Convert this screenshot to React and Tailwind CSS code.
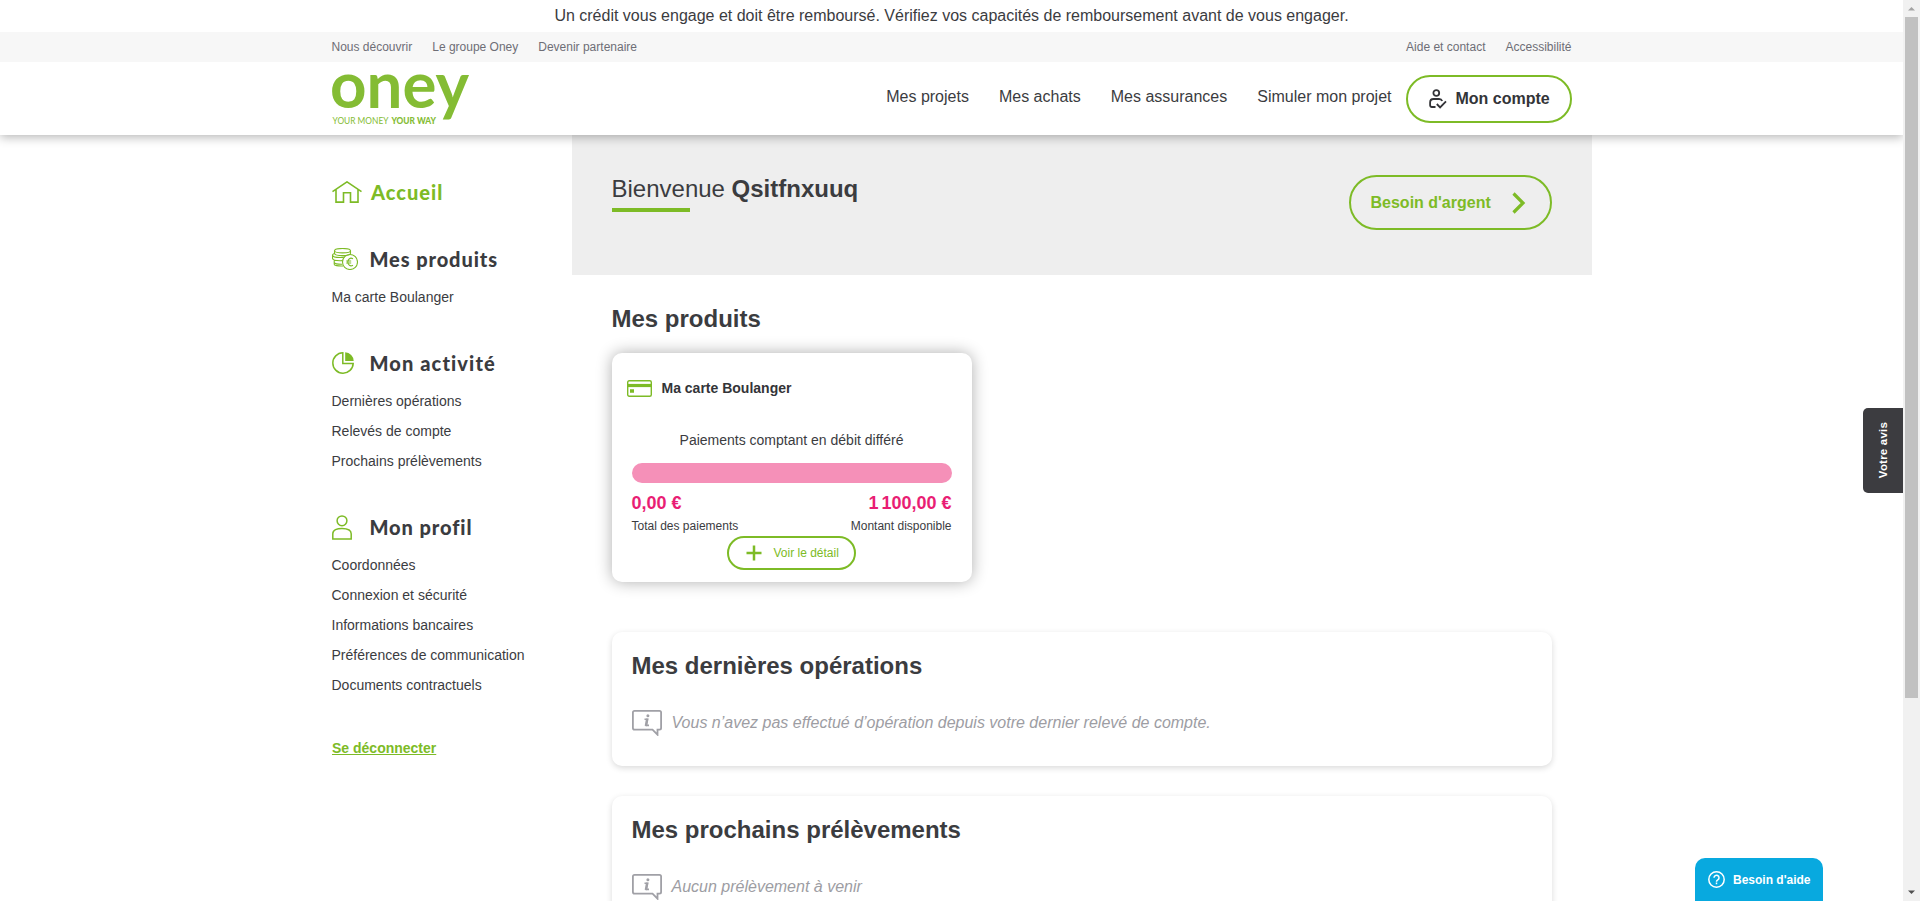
import React from "react";

const G = "#7dbb26";

function Icon({ w, h, sw = 1.4, className = "", children }) {
  return (
    <svg width={w} height={h} viewBox={`0 0 ${w} ${h}`} fill="none" stroke={G} strokeWidth={sw} className={"block shrink-0 " + className}>
      {children}
    </svg>
  );
}

const HomeIcon = () => (
  <Icon w={30} h={22} sw={1.6} className="ml-[0.5px]">
    <path d="M.5 10.6 15 .9l14.5 9.7M4 8.6v12.500h7.500v-9.300h7v9.300h7.500V8.600" />
  </Icon>
);

const CoinsIcon = () => (
  <Icon w={26} h={22} sw={1.1} className="ml-[0.5px]">
    <ellipse cx="10.500" cy="2.700" rx="8" ry="2.200" />
    <path d="M2.500 2.700v2.500c0 1.400 3.600 2.400 8 2.400s8-1 8-2.400V2.700" />
    <path d="M2.800 5.200C1.400 5.700.5 6.300.5 7c0 1.400 3.500 2.500 7.600 2.500 1.700 0 3.200-.1 4.400-.5M.5 7v3.300c0 1.300 3.500 2.400 7.600 2.400 1 0 1.700 0 2.500-.1M2.200 11.800v2.500c0 1.400 3.400 2.100 8 2M2.200 14.500v1.700c0 1.300 3.600 2 9 1.800" />
    <circle cx="18" cy="14" r="7.500" />
    <path d="M21 10.800c-2.700-1.600-5.200.2-5.200 3.200s2.500 4.800 5.200 3.200M14.200 13h5M14.200 15h5" />
  </Icon>
);

const PieIcon = () => (
  <Icon w={22} h={22} sw={1.500} className="ml-[0.5px]">
    <path d="M10.800.8A10.200 10.200 0 1 0 21.200 11.400H10.800z" />
    <path d="M13.200.3A8.800 8.800 0 0 1 21.700 9H13.200z" fill={G} stroke="none" />
  </Icon>
);

const UserIcon = () => (
  <Icon w={20} h={25} sw={1.500} className="ml-[0.5px]">
    <circle cx="10" cy="5.800" r="4.900" />
    <path d="M.8 24v-5.300c0-3.600 4.100-5.300 9.200-5.300s9.200 1.700 9.200 5.300V24z" />
  </Icon>
);

const AccountIcon = () => (
  <svg width="18" height="20" viewBox="0 0 18 20" fill="none" stroke="#333438" strokeWidth="1.8" className="block">
    <circle cx="7.300" cy="4" r="2.900" />
    <path d="M6.500 18H2.800A1.700 1.700 0 0 1 1.100 16.300V13.500c0-2.100 1.400-3.500 3.400-3.500h5.600c1.500 0 2.600.8 3.100 2M7.800 15l3.300 3.400 5.900-6" />
  </svg>
);

const InfoIcon = () => (
  <svg width="30" height="26" viewBox="0 0 30 26" fill="none" stroke="#a0a0a6" strokeWidth="1.800" className="block shrink-0">
    <path d="M2.500.9h25q1.600 0 1.600 1.600v15.600q0 1.600-1.600 1.600h-2v5l-5-5h-18Q.9 19.700.9 18.100V2.500Q.9.900 2.500.9z" />
    <circle cx="15.900" cy="5.700" r="1.500" fill="#a0a0a6" stroke="none" />
    <path d="M12.500 9.200h3.200l-1.300 6.200h2.600" strokeWidth="1.600" />
    <path d="M15.100 8.600 13.800 16" strokeWidth="2.200" />
  </svg>
);

function Group({ icon, tracking, title, links, className }) {
  return (
    <div className={className}>
      <div className="flex h-[30px] items-center">
        <div className="flex w-[38px] items-center">{icon}</div>
        <h2 className={"font-['Lato',sans-serif] text-[20px] font-black leading-[30px] whitespace-nowrap " + tracking}>{title}</h2>
      </div>
      <ul className="mt-[8px]">
        {links.map((l) => (
          <li key={l} className="h-[30px] text-[14px] leading-[30px]">{l}</li>
        ))}
      </ul>
    </div>
  );
}

function Panel({ title, text }) {
  return (
    <section className="h-[134px] shrink-0 rounded-[10px] bg-white px-5 pt-[20px] shadow-[0_2px_6px_rgba(0,0,0,0.15)]">
      <h2 className="text-[24px] font-bold leading-[28px]">{title}</h2>
      <div className="mt-[30px] flex items-start">
        <InfoIcon />
        <p className="ml-[10px] mt-[3px] text-[16px] italic leading-[20px] text-[#9d9da3]">{text}</p>
      </div>
    </section>
  );
}

export default function App() {
  return (
    <div className="relative flex h-[901px] w-[1920px] overflow-hidden bg-white font-['Liberation_Sans',Arial,sans-serif] text-[#3b3c3f]">
      <div className="flex w-[1903px] flex-col">
        <p className="h-8 text-center text-[16px] leading-[32px]">
          Un crédit vous engage et doit être remboursé. Vérifiez vos capacités de remboursement avant de vous engager.
        </p>
        <div className="relative z-20 h-[30px] bg-[#f7f7f7]">
          <div className="mx-auto flex w-[1240px] gap-5 text-[12px] leading-[30px] text-[#6e6e76]">
            <span>Nous découvrir</span>
            <span>Le groupe Oney</span>
            <span>Devenir partenaire</span>
            <span className="ml-auto">Aide et contact</span>
            <span>Accessibilité</span>
          </div>
        </div>
        <header className="relative z-10 h-[73px] shrink-0 bg-white shadow-[0_2px_10px_rgba(0,0,0,0.3)]">
          <div className="mx-auto flex w-[1240px] items-start">
            <svg width="140" height="66" viewBox="0 0 140 66" className="block overflow-visible font-['Lato',sans-serif]" fill="#84bc34">
              <text x="-2" y="45.500" fontSize="65" fontWeight="700" textLength="139" lengthAdjust="spacingAndGlyphs">oney</text>
              <text x="0.500" y="62" fontSize="9" textLength="56" lengthAdjust="spacingAndGlyphs">YOUR MONEY</text>
              <text x="59.500" y="62" fontSize="9" fontWeight="900" textLength="44.500" lengthAdjust="spacingAndGlyphs">YOUR WAY</text>
            </svg>
            <nav className="ml-auto mt-[24px] flex gap-[30px] text-[16px] leading-[22px]">
              <span>Mes projets</span>
              <span>Mes achats</span>
              <span>Mes assurances</span>
              <span>Simuler mon projet</span>
            </nav>
            <button className="ml-[14px] mt-[13px] flex h-[48px] w-[166px] items-center rounded-full border-2 border-[#7dbb26] pl-[21px] text-[16px] font-bold text-[#333438]">
              <AccountIcon />
              <span className="ml-[9px] leading-[20px]">Mon compte</span>
            </button>
          </div>
        </header>
        <div className="mx-auto flex w-[1280px] flex-1">
          <aside className="w-[260px] pl-5 pt-[42px]">
            <div className="flex h-[30px] items-center text-[#7dbb26]">
              <HomeIcon />
              <span className="ml-[9px] font-['Lato',sans-serif] text-[20px] font-black leading-[30px] tracking-[1px]">Accueil</span>
            </div>
            <Group className="mt-[37px]" tracking="tracking-[0.9px]" icon={<CoinsIcon />} title="Mes produits" links={["Ma carte Boulanger"]} />
            <Group className="mt-[36px]" tracking="tracking-[1.1px]" icon={<PieIcon />} title="Mon activité" links={["Dernières opérations", "Relevés de compte", "Prochains prélèvements"]} />
            <Group
              className="mt-[36px]"
              tracking="tracking-[0.9px]"
              icon={<UserIcon />}
              title="Mon profil"
              links={["Coordonnées", "Connexion et sécurité", "Informations bancaires", "Préférences de communication", "Documents contractuels"]}
            />
            <a className="ml-[0.5px] mt-[38px] block text-[14px] font-bold leading-[20px] text-[#7dbb26] underline">Se déconnecter</a>
          </aside>
          <main className="w-[1020px]">
            <div className="flex h-[140px] items-start justify-between bg-[#eeeeee] px-10 pt-10">
              <div>
                <h1 className="text-[24px] leading-[28px]">
                  Bienvenue <b>Qsitfnxuuq</b>
                </h1>
                <div className="mt-[5px] h-1 w-[78px] bg-[#7dbb26]" />
              </div>
              <button className="flex h-[55px] w-[203px] items-center rounded-full border-2 border-[#7dbb26] pl-[20px] text-[16px] font-bold text-[#7dbb26]">
                Besoin d'argent
                <Icon w={14} h={22} sw={3.2} className="ml-[21px]">
                  <path d="M1.500 1.500 11 11l-9.500 9.500" />
                </Icon>
              </button>
            </div>
            <div className="flex flex-col px-10 pt-[30px]">
              <h2 className="text-[24px] font-bold leading-[28px]">Mes produits</h2>
              <section className="mt-5 flex h-[229px] w-[360px] flex-col rounded-[10px] bg-white px-5 pt-[25px] shadow-[0_0_16px_rgba(0,0,0,0.32)]">
                <div className="-ml-[5px] flex h-[20px] items-center">
                  <Icon w={25} h={17} sw={1.400} className="ml-[0.5px]">
                    <rect x=".7" y=".7" width="23.600" height="15.600" rx="1.500" />
                    <path d="M1 5.500h23" strokeWidth="3.200" />
                    <path d="M3 11h4" strokeWidth="3.500" />
                  </Icon>
                  <span className="ml-[9.5px] text-[14px] font-bold text-[#333438]">Ma carte Boulanger</span>
                </div>
                <p className="mt-[32px] text-center text-[14px] leading-[20px]">Paiements comptant en débit différé</p>
                <div className="mt-[13px] h-5 rounded-full bg-[#f590b8]" />
                <div className="mt-[10px] flex justify-between text-[18px] font-bold leading-[20px] text-[#e91e74]">
                  <span>0,00 €</span>
                  <span><span className="[word-spacing:-2px]">1 </span>100,00 €</span>
                </div>
                <div className="mt-[5px] flex justify-between text-[12px] leading-[16px]">
                  <span>Total des paiements</span>
                  <span>Montant disponible</span>
                </div>
                <button className="mt-[2px] ml-[95px] flex h-[34px] w-[129px] shrink-0 items-center rounded-full border-2 border-[#7dbb26] pl-[17px] text-[12px] text-[#7dbb26]">
                  <Icon w={16} h={16} sw={2.500}>
                    <path d="M8 .5v15M.5 8h15" />
                  </Icon>
                  <span className="ml-[12px]">Voir le détail</span>
                </button>
              </section>
              <div className="mt-[50px] flex flex-col gap-[30px]">
                <Panel title="Mes dernières opérations" text="Vous n’avez pas effectué d’opération depuis votre dernier relevé de compte." />
                <Panel title="Mes prochains prélèvements" text="Aucun prélèvement à venir" />
              </div>
            </div>
          </main>
        </div>
      </div>
      <div className="relative z-30 flex w-[17px] flex-col items-center justify-between bg-[#f1f1f1]">
        <svg width="17" height="17" viewBox="0 0 17 17" className="block"><path d="M5 10.500h7L8.500 7z" fill="#a3a3a3" /></svg>
        <div className="h-[681px] w-[13px] bg-[#c1c1c1]" />
        <div className="flex-1" />
        <svg width="17" height="17" viewBox="0 0 17 17" className="block"><path d="M5 6.500h7L8.500 10z" fill="#505050" /></svg>
      </div>
      <div className="absolute left-[1863px] top-[408px] flex h-[85px] w-[40px] items-center justify-center rounded-l-[5px] bg-[#3c3c40]">
        <span className="rotate-180 text-[11.5px] font-bold leading-[16px] tracking-[0.2px] text-white [writing-mode:vertical-rl]">Votre avis</span>
      </div>
      <div className="absolute left-[1695px] top-[858px] flex h-[43px] w-[128px] items-center rounded-t-[10px] bg-[#08a9df] pl-[13px] text-[12px] font-bold text-white">
        <svg width="17" height="17" viewBox="0 0 17 17" fill="none" stroke="white" strokeWidth="1.500" className="block">
          <circle cx="8.500" cy="8.500" r="7.700" />
          <path d="M6 6.700a2.500 2.500 0 1 1 4 2c-.9.600-1.500 1-1.500 2M8.500 11.600v1.600" />
        </svg>
        <span className="ml-[8px]">Besoin d'aide</span>
      </div>
    </div>
  );
}
